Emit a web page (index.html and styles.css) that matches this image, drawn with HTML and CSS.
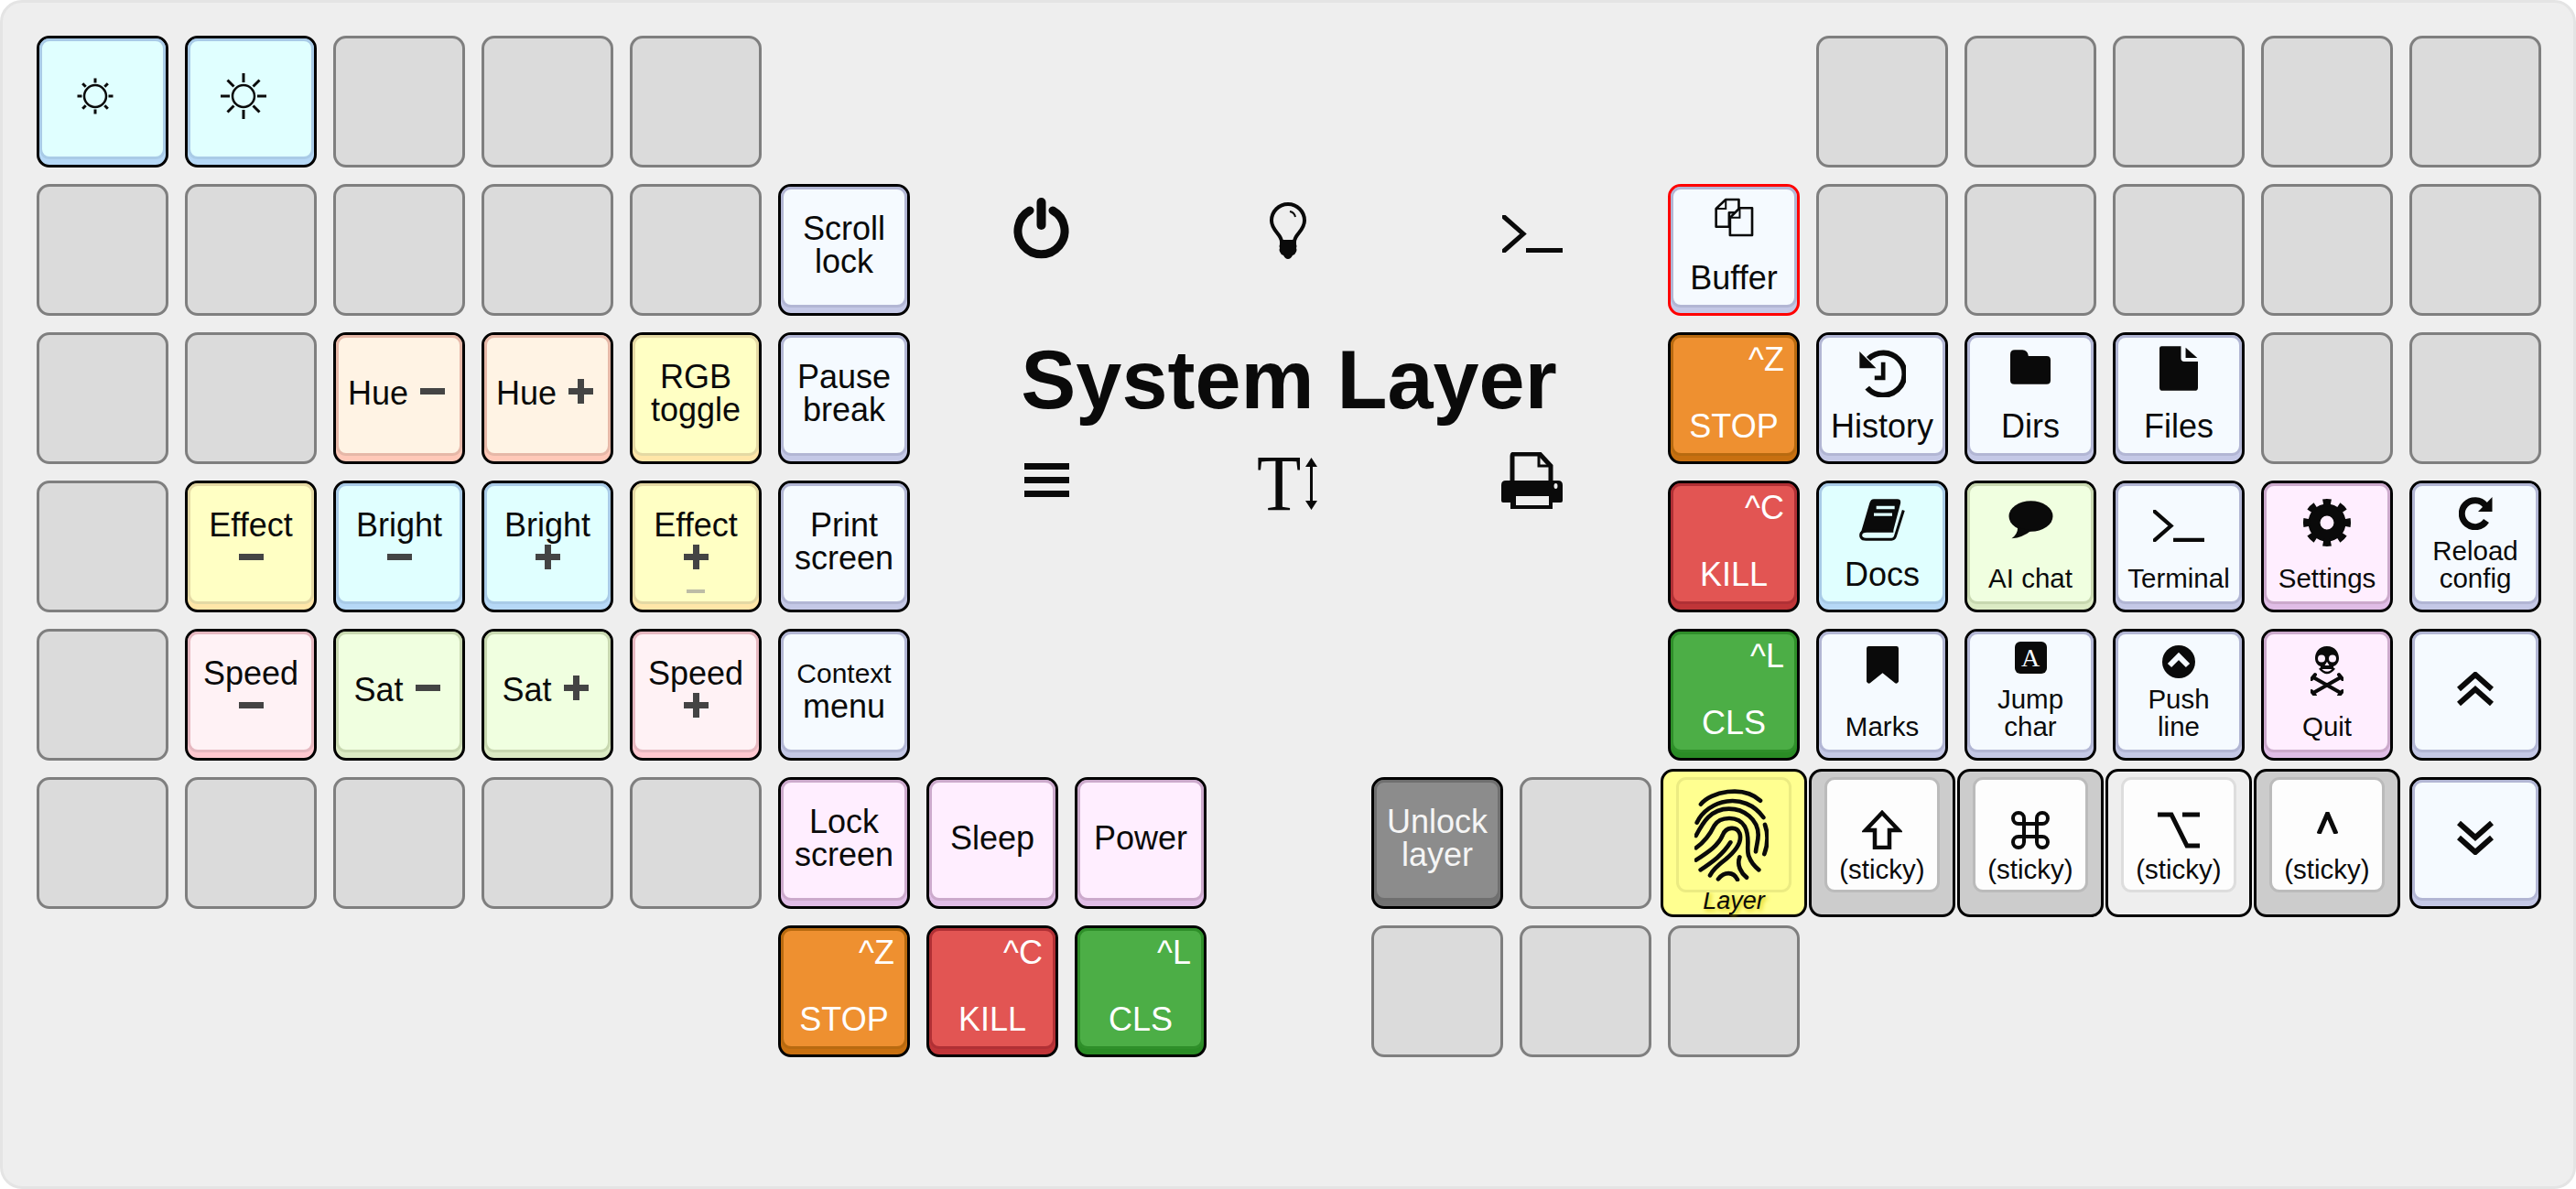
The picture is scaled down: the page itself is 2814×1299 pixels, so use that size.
FILE: index.html
```html
<!DOCTYPE html>
<html lang="en">
<head>
  <meta charset="UTF-8">
  <title>System Layer</title>
  <link rel="stylesheet" href="styles.css">
</head>
<body>
  <svg class="sprite">
    <symbol id="plus" viewBox="0 0 27 27"><path d="M0 13.5H27M13.5 0V27" stroke="#444" stroke-width="7"/></symbol>
    <symbol id="minus" viewBox="0 0 27 27"><path d="M0 13.5H27" stroke="#444" stroke-width="7"/></symbol>
    <symbol id="prompt" viewBox="0 0 66 41"><path d="M2 2 L23 20.5 L2 39" fill="none" stroke="#0a0a0a" stroke-width="5" stroke-linecap="round" stroke-linejoin="miter"/><path d="M26 38.5H66" stroke="#0a0a0a" stroke-width="5"/></symbol>
  </svg>

  <main class="board">
    <!-- row 1 -->
    <div class="key blue"><div class="cap"><svg class="sun" viewBox="0 0 52 52"><circle cx="26" cy="26" r="12" fill="none" stroke="#0a0a0a" stroke-width="2.5"/><path d="M26 6.500V11.500M26 40.500V45.500M6.500 26H11.500M40.500 26H45.500M12.200 12.200L15.700 15.700M36.300 36.300L39.800 39.800M12.200 39.800L15.700 36.300M36.300 15.700L39.800 12.200" stroke="#0a0a0a" stroke-width="3"/></svg></div></div>
    <div class="key blue"><div class="cap"><svg class="sun" viewBox="0 0 52 52"><circle cx="26" cy="26" r="12" fill="none" stroke="#0a0a0a" stroke-width="2.500"/><path d="M26 1V11M26 41V51M1 26H11M41 26H51M8.500 8.500L15.500 15.500M36.500 36.500L43.500 43.500M8.500 43.500L15.500 36.500M36.500 15.500L43.500 8.500" stroke="#0a0a0a" stroke-width="3"/></svg></div></div>
    <div class="key blank"></div>
    <div class="key blank"></div>
    <div class="key blank"></div>
    <div class="key blank col-13"></div>
    <div class="key blank"></div>
    <div class="key blank"></div>
    <div class="key blank"></div>
    <div class="key blank"></div>

    <!-- middle of the board -->
    <section class="center">
      <div class="center-row top">
        <svg class="c-power" viewBox="0 0 61 67"><path d="M18 14A25.500 25.500 0 1 0 43 14" fill="none" stroke="#0a0a0a" stroke-width="9" stroke-linecap="round"/><path d="M30.500 5V30" stroke="#0a0a0a" stroke-width="10" stroke-linecap="round"/></svg>
        <svg class="c-bulb" viewBox="0 0 42 62"><path d="M14 43C14 35 3 31 3 20A18 18 0 0 1 39 20C39 31 28 35 28 43Z" fill="none" stroke="#0a0a0a" stroke-width="4"/><path d="M23 10Q28 11 29 16" fill="none" stroke="#0a0a0a" stroke-width="2"/><path d="M12 43H30V46Q31 48 30 50Q31 52 30 54Q29 57 26 58Q24 62 21 62Q18 62 16 58Q13 57 12 54Q11 52 12 50Q11 48 12 46Z" fill="#0a0a0a"/></svg>
        <svg class="c-prompt"><use href="#prompt"/></svg>
      </div>
      <h1 class="title">System Layer</h1>
      <div class="center-row bottom">
        <svg class="c-menu" viewBox="0 0 49 37"><path d="M0 3.500H49M0 18.500H49M0 33.500H49" stroke="#0a0a0a" stroke-width="7"/></svg>
        <div class="c-size"><span class="c-size-t">T</span><svg viewBox="0 0 15 57"><path d="M7.500 4V53" stroke="#0a0a0a" stroke-width="3"/><path d="M7.500 0L14 10H1ZM7.500 57L14 47H1Z" fill="#0a0a0a"/></svg></div>
        <svg class="c-print" viewBox="0 0 67 62"><path d="M12 33V4Q12 2 14 2H42L54 15V33" fill="none" stroke="#0a0a0a" stroke-width="5"/><path d="M41 2V15H54" fill="none" stroke="#0a0a0a" stroke-width="3"/><path d="M5 31H62Q67 31 67 36V53Q67 55 65 55H56V62H10V55H2Q0 55 0 53V36Q0 31 5 31Z" fill="#0a0a0a"/><path d="M16 48H52V58H16Z" fill="#eee"/><ellipse cx="59.500" cy="37" rx="2" ry="3" fill="#eee"/></svg>
      </div>
    </section>

    <!-- row 2 -->
    <div class="key blank"></div>
    <div class="key blank"></div>
    <div class="key blank"></div>
    <div class="key blank"></div>
    <div class="key blank"></div>
    <div class="key ice"><div class="cap">Scroll<br>lock</div></div>
    <div class="key ice alert col-12"><div class="cap stack">
      <svg class="i-buffer" viewBox="185 76 130 130"><path d="M222 82H265V125H233V172H190V112Z" fill="none" stroke="#0a0a0a" stroke-width="8" stroke-linejoin="round"/><path d="M222 82V112H190" fill="none" stroke="#0a0a0a" stroke-width="6"/><path d="M268 110H309V200H236V142Z" fill="#f5faff" stroke="#0a0a0a" stroke-width="8" stroke-linejoin="round"/><path d="M268 110V142H236" fill="none" stroke="#0a0a0a" stroke-width="6"/></svg>
      Buffer
    </div></div>
    <div class="key blank"></div>
    <div class="key blank"></div>
    <div class="key blank"></div>
    <div class="key blank"></div>
    <div class="key blank"></div>

    <!-- row 3 -->
    <div class="key blank"></div>
    <div class="key blank"></div>
    <div class="key peach"><div class="cap"><div class="inline">Hue<svg class="sym"><use href="#minus"/></svg></div></div></div>
    <div class="key peach"><div class="cap"><div class="inline">Hue<svg class="sym"><use href="#plus"/></svg></div></div></div>
    <div class="key yellow"><div class="cap">RGB<br>toggle</div></div>
    <div class="key ice"><div class="cap">Pause<br>break</div></div>
    <div class="key orange col-12"><div class="cap ctrl"><span class="corner">^Z</span>STOP</div></div>
    <div class="key ice"><div class="cap stack">
      <svg class="i-history" viewBox="655 580 155 155"><path d="M684 704A69 69 0 1 0 688 610" fill="none" stroke="#0a0a0a" stroke-width="18"/><path d="M659 586V640H713Z" fill="#0a0a0a"/><path d="M736 621V672H708" fill="none" stroke="#0a0a0a" stroke-width="14"/></svg>
      History
    </div></div>
    <div class="key ice"><div class="cap stack">
      <svg class="i-dirs" viewBox="1155 577 133 113"><path d="M1170 577H1195Q1212 577 1215 597H1275Q1288 597 1288 610V677Q1288 690 1275 690H1168Q1155 690 1155 677V592Q1155 577 1170 577Z" fill="#0a0a0a"/></svg>
      Dirs
    </div></div>
    <div class="key ice"><div class="cap stack">
      <svg class="i-files" viewBox="205 70 125 145"><path d="M212 70H275V110Q275 120 285 120H330V205Q330 215 320 215H215Q205 215 205 205V77Q205 70 212 70Z" fill="#0a0a0a"/><path d="M290 75L328 108H290Z" fill="#0a0a0a"/></svg>
      Files
    </div></div>
    <div class="key blank"></div>
    <div class="key blank"></div>

    <!-- row 4 -->
    <div class="key blank"></div>
    <div class="key yellow"><div class="cap">Effect<svg class="sym under"><use href="#minus"/></svg></div></div>
    <div class="key blue"><div class="cap">Bright<svg class="sym under"><use href="#minus"/></svg></div></div>
    <div class="key blue"><div class="cap">Bright<svg class="sym under"><use href="#plus"/></svg></div></div>
    <div class="key yellow"><div class="cap">Effect<svg class="sym under"><use href="#plus"/></svg><span class="faint"></span></div></div>
    <div class="key ice"><div class="cap">Print<br>screen</div></div>
    <div class="key red col-12"><div class="cap ctrl"><span class="corner">^C</span>KILL</div></div>
    <div class="key blue"><div class="cap stack">
      <svg class="i-docs" viewBox="660 100 150 140"><path d="M708 103H785Q798 103 795 118L772 205H690Q668 208 662 225L694 116Q698 103 708 103Z" fill="#0a0a0a"/><path d="M805 140L778 226Q775 235 766 235H682Q665 235 665 222Q665 208 685 208H772" fill="none" stroke="#0a0a0a" stroke-width="9"/><path d="M716 131H776M708 154H768" stroke="#e0ffff" stroke-width="10"/></svg>
      Docs
    </div></div>
    <div class="key lime"><div class="cap stack small">
      <svg class="i-chat" viewBox="1148 112 146 126"><ellipse cx="1221" cy="163" rx="72" ry="50" fill="#0a0a0a"/><path d="M1178 200Q1178 222 1158 236Q1195 232 1222 210Z" fill="#0a0a0a"/></svg>
      AI chat
    </div></div>
    <div class="key ice"><div class="cap stack small">
      <svg class="i-prompt"><use href="#prompt"/></svg>
      Terminal
    </div></div>
    <div class="key lilac"><div class="cap stack small">
      <svg class="i-gear" viewBox="0 0 52 52"><circle cx="26" cy="26" r="14" fill="none" stroke="#0a0a0a" stroke-width="13"/><circle cx="26" cy="26" r="22" fill="none" stroke="#0a0a0a" stroke-width="8" pathLength="80" stroke-dasharray="5 5" stroke-dashoffset="2.500"/></svg>
      Settings
    </div></div>
    <div class="key ice"><div class="cap stack small">
      <svg class="i-reload" viewBox="0 0 37 36"><path d="M30 26A14.500 14.500 0 1 1 29 9" fill="none" stroke="#0a0a0a" stroke-width="7"/><path d="M36.500 0V16H21Z" fill="#0a0a0a"/></svg>
      Reload<br>config
    </div></div>

    <!-- row 5 -->
    <div class="key blank"></div>
    <div class="key pink"><div class="cap">Speed<svg class="sym under"><use href="#minus"/></svg></div></div>
    <div class="key lime"><div class="cap"><div class="inline sat">Sat<svg class="sym"><use href="#minus"/></svg></div></div></div>
    <div class="key lime"><div class="cap"><div class="inline sat">Sat<svg class="sym"><use href="#plus"/></svg></div></div></div>
    <div class="key pink"><div class="cap">Speed<svg class="sym under"><use href="#plus"/></svg></div></div>
    <div class="key ice"><div class="cap"><span class="tiny">Context</span>menu</div></div>
    <div class="key green col-12"><div class="cap ctrl"><span class="corner">^L</span>CLS</div></div>
    <div class="key ice"><div class="cap stack small">
      <svg class="i-mark" viewBox="683 588 104 122"><path d="M690 588H780Q787 588 787 595V703Q780 714 772 705L735 675L698 705Q690 714 683 703V595Q683 588 690 588Z" fill="#0a0a0a"/></svg>
      Marks
    </div></div>
    <div class="key ice"><div class="cap stack small">
      <div class="i-jump">A</div>
      Jump<br>char
    </div></div>
    <div class="key ice"><div class="cap stack small">
      <svg class="i-push" viewBox="0 0 36 36"><circle cx="18" cy="18" r="18" fill="#0a0a0a"/><path d="M8 22L18 12L28 22" fill="none" stroke="#f5faff" stroke-width="6"/></svg>
      Push<br>line
    </div></div>
    <div class="key lilac"><div class="cap stack small">
      <svg class="i-skull" viewBox="0 0 36 54"><path fill-rule="evenodd" d="M18 0C9 0 5 7 5 13C5 18 8 21 11 22V25H25V22C28 21 31 18 31 13C31 7 27 0 18 0ZM12 9.500A4 4 0 1 1 12 17.500A4 4 0 1 1 12 9.500ZM24 9.500A4 4 0 1 1 24 17.500A4 4 0 1 1 24 9.500ZM18 17L20.500 21H15.500Z" fill="#0a0a0a"/><path d="M10 24Q18 34 26 24" fill="none" stroke="#0a0a0a" stroke-width="2.500"/><path d="M3 34L33 51M33 34L3 51" stroke="#0a0a0a" stroke-width="4"/><path d="M1 36L5 31M31 31L35 36M1 49L5 54M31 54L35 49" stroke="#0a0a0a" stroke-width="4" stroke-linecap="round"/></svg>
      Quit
    </div></div>
    <div class="key ice"><div class="cap">
      <svg class="i-chev" viewBox="0 0 40 38"><path d="M2 19L20 3L38 19M2 35L20 19L38 35" fill="none" stroke="#0a0a0a" stroke-width="6"/></svg>
    </div></div>

    <!-- row 6 -->
    <div class="key blank"></div>
    <div class="key blank"></div>
    <div class="key blank"></div>
    <div class="key blank"></div>
    <div class="key blank"></div>
    <div class="key lilac"><div class="cap">Lock<br>screen</div></div>
    <div class="key lilac"><div class="cap">Sleep</div></div>
    <div class="key lilac"><div class="cap">Power</div></div>
    <div class="key gray col-10"><div class="cap">Unlock<br>layer</div></div>
    <div class="key blank"></div>
    <div class="key big layer">
      <div class="cap">
        <svg class="i-print" viewBox="187 92 243 306"><path d="M208 145C240 105 345 80 403 133M195 205C230 130 350 100 413 188M192 248C215 205 240 160 300 160C350 160 395 195 396 245C396 265 390 280 388 300M418 212C428 240 428 275 416 308M192 288C225 265 240 240 252 215C270 185 330 180 352 218C372 255 355 290 365 315C372 335 385 350 398 360M192 328C235 300 265 280 280 245C290 220 325 215 335 240C345 270 320 300 290 325C270 340 250 355 238 378M207 360C245 335 280 310 305 270M335 318C325 345 340 370 358 385M265 390C285 365 315 365 328 392" fill="none" stroke="#0a0a0a" stroke-width="14" stroke-linecap="round"/></svg>
      </div>
      <span class="layer-name">Layer</span>
    </div>
    <div class="key big"><div class="cap sticky">
      <svg class="i-shift" viewBox="0 0 44 43"><path d="M22 3L40 22H30V41H14V22H4Z" fill="none" stroke="#0a0a0a" stroke-width="4.500"/></svg>
      (sticky)
    </div></div>
    <div class="key big"><div class="cap sticky">
      <svg class="i-cmd" viewBox="0 0 42 42"><path d="M14 8A6 6 0 1 0 8 14H34A6 6 0 1 0 28 8V34A6 6 0 1 0 34 28H8A6 6 0 1 0 14 34Z" fill="none" stroke="#0a0a0a" stroke-width="4"/></svg>
      (sticky)
    </div></div>
    <div class="key big off"><div class="cap sticky">
      <svg class="i-opt" viewBox="0 0 46 40"><path d="M0 3H15L32 37H46M27 3H46" fill="none" stroke="#0a0a0a" stroke-width="5"/></svg>
      (sticky)
    </div></div>
    <div class="key big"><div class="cap sticky">
      <svg class="i-ctl" viewBox="0 0 23 24"><path d="M2 24L11.500 2L21 24" fill="none" stroke="#0a0a0a" stroke-width="5"/></svg>
      (sticky)
    </div></div>
    <div class="key ice"><div class="cap">
      <svg class="i-chev" viewBox="0 0 40 38"><path d="M2 3L20 19L38 3M2 19L20 35L38 19" fill="none" stroke="#0a0a0a" stroke-width="6"/></svg>
    </div></div>

    <!-- row 7 -->
    <div class="key orange col-6"><div class="cap ctrl"><span class="corner">^Z</span>STOP</div></div>
    <div class="key red"><div class="cap ctrl"><span class="corner">^C</span>KILL</div></div>
    <div class="key green"><div class="cap ctrl"><span class="corner">^L</span>CLS</div></div>
    <div class="key blank col-10"></div>
    <div class="key blank"></div>
    <div class="key blank"></div>
  </main>
</body>
</html>
```

FILE: styles.css
```css
html, body {
  margin: 0;
  background: #fff;
}
.sprite {
  display: none;
}
.board {
  box-sizing: border-box;
  width: 2814px;
  height: 1299px;
  padding: 36px 37px;
  background: #eee;
  border: 3px solid #e4e4e4;
  border-radius: 24px;
  display: grid;
  grid-template-columns: repeat(17, 144px);
  grid-auto-rows: 144px;
  gap: 18px;
  font-family: "Liberation Sans", Arial, sans-serif;
  font-size: 36px;
  line-height: 36px;
  color: #0a0a0a;
}
.col-6 { grid-column-start: 6; }
.col-10 { grid-column-start: 10; }
.col-12 { grid-column-start: 12; }
.col-13 { grid-column-start: 13; }

/* keys */
.key {
  box-sizing: border-box;
  border: 3px solid #000;
  border-radius: 14px;
  background: var(--side);
  position: relative;
}
.blank {
  background: #dbdbdb;
  border-color: #7f7f7f;
}
.alert {
  border-color: #f00;
}
.cap {
  box-sizing: border-box;
  height: 132px;
  padding-bottom: 4px;
  border: 3px solid var(--edge);
  border-radius: 11px;
  background: var(--fill);
  display: flex;
  flex-direction: column;
  align-items: center;
  justify-content: center;
  text-align: center;
  position: relative;
}

/* colours */
.blue { --side: #b6d8f6; --edge: #a9cbe7; --fill: #e0ffff; }
.peach { --side: #ffc8b8; --edge: #e6b8a8; --fill: #fff3e4; }
.yellow { --side: #ffe6a8; --edge: #e4d9a4; --fill: #ffffc4; }
.ice { --side: #c4c8e6; --edge: #b2b6d4; --fill: #f5faff; }
.lilac { --side: #e0bde6; --edge: #ccaacc; --fill: #ffeeff; }
.pink { --side: #ffc8d0; --edge: #e6b8c0; --fill: #fff2f5; }
.lime { --side: #dcebc4; --edge: #c8d8b0; --fill: #f0ffe0; }
.orange { --side: #c87010; --edge: #b86a10; --fill: #ee9030; }
.red { --side: #c03538; --edge: #b03035; --fill: #e25553; }
.green { --side: #2a8c25; --edge: #2f8f2a; --fill: #4cae46; }
.gray { --side: #727272; --edge: #6f6f6f; --fill: #8c8c8c; color: #f5f5f5; }

/* label layouts */
.stack {
  justify-content: flex-end;
  padding-bottom: 11px;
}
.stack svg, .stack .i-jump {
  flex: none;
}
.small {
  padding-bottom: 10px;
  font-size: 29.5px;
  line-height: 30px;
}
.tiny {
  font-size: 30px;
}
.ctrl {
  justify-content: space-between;
  padding: 6px 0 11px;
  color: #fff;
}
.corner {
  align-self: flex-end;
  margin-right: 11px;
}
.inline {
  display: flex;
  align-items: center;
  gap: 13px;
  margin-right: 6px;
}
.inline.sat {
  margin-right: 5px;
}
.sym {
  width: 27px;
  height: 27px;
  margin-bottom: 6px;
}
.sym.under {
  margin: 3px 0 6px;
  flex: none;
}
.faint {
  position: absolute;
  bottom: 9px;
  left: 50%;
  width: 20px;
  height: 4px;
  margin-left: -10px;
  background: #bdbca6;
}
.sun {
  width: 52px;
  height: 52px;
  margin: 0 16px 2px 0;
}

/* icon sizes */
.i-buffer { width: 43px; height: 43px; margin-bottom: 27px; }
.i-history { width: 52px; height: 52px; margin-bottom: 14px; }
.i-dirs { width: 44px; height: 38px; margin-bottom: 28px; }
.i-files { width: 42px; height: 49px; margin-bottom: 21px; }
.i-docs { width: 50px; height: 47px; margin-bottom: 19px; }
.i-chat { width: 49px; height: 42px; margin-bottom: 28px; }
.i-prompt { width: 56px; height: 35px; margin-bottom: 25px; }
.i-gear { width: 52px; height: 52px; margin-bottom: 20px; }
.i-reload { width: 37px; height: 36px; margin-bottom: 8px; }
.i-mark { width: 35px; height: 41px; margin-bottom: 32px; }
.i-jump {
  width: 35px;
  height: 35px;
  margin-bottom: 13px;
  border-radius: 6px;
  background: #0a0a0a;
  color: #f5faff;
  font-family: "Liberation Serif", "Times New Roman", serif;
  font-size: 28px;
  line-height: 35px;
}
.i-push { width: 36px; height: 36px; margin-bottom: 8px; }
.i-skull { width: 36px; height: 54px; margin-bottom: 19px; }
.i-chev { width: 40px; height: 38px; margin-bottom: 2px; }

/* wide thumb keys */
.big {
  margin: -9px -8px;
  background: #ccc;
  --edge: #bbb;
  --fill: #fdfdfd;
}
.big.off {
  background: #eee;
  --edge: #ddd;
}
.big .cap {
  width: 126px;
  height: 126px;
  margin: 6px auto 0;
}
.sticky {
  justify-content: flex-end;
  padding-bottom: 7px;
  font-size: 29.5px;
  line-height: 30px;
}
.i-shift { width: 44px; height: 43px; margin-bottom: 7px; }
.i-cmd { width: 42px; height: 42px; margin-bottom: 7px; }
.i-opt { width: 46px; height: 40px; margin-bottom: 8px; }
.i-ctl { width: 23px; height: 24px; margin-bottom: 24px; }

.layer {
  background: #ffff90;
  --edge: #ebeb82;
  --fill: #ffff90;
}
.layer .cap {
  justify-content: flex-start;
  padding: 9px 0 0;
}
.i-print {
  width: 81px;
  height: 102px;
  margin-right: 6px;
  flex: none;
}
.layer-name {
  display: block;
  margin-top: -5px;
  text-align: center;
  font-size: 27px;
  line-height: 28px;
  font-style: italic;
  text-shadow: 2px 2px 5px #d8c400;
}

/* middle block */
.center {
  grid-column: 7 / span 5;
  grid-row: 2 / span 4;
  margin: 0 -6px;
}
.center-row {
  display: grid;
  grid-template-columns: repeat(3, 1fr);
  justify-items: center;
  align-items: start;
}
.center-row.top {
  height: 169px;
}
.center-row.bottom {
  margin-top: 34px;
}
.title {
  margin: 0;
  font-size: 90px;
  line-height: 90px;
  font-weight: bold;
  text-align: center;
}
.c-power { width: 61px; height: 67px; margin: 15px 5px 0 0; }
.c-bulb { width: 42px; height: 62px; margin: 20px 2px 0 0; }
.c-prompt { width: 66px; height: 41px; margin: 34px 4px 0 0; }
.c-menu { width: 49px; height: 37px; margin: 12px 0 0 6px; }
.c-size {
  display: flex;
  align-items: flex-start;
  margin: 6px 4px 0 0;
}
.c-size svg { width: 15px; height: 57px; margin-left: 4px; }
.c-size-t {
  width: 48px;
  font-family: "Liberation Serif", "Times New Roman", serif;
  font-size: 86px;
  line-height: 57px;
  transform: scaleX(.92);
  transform-origin: left;
}
.c-print { width: 67px; height: 62px; margin-right: 5px; }
```
